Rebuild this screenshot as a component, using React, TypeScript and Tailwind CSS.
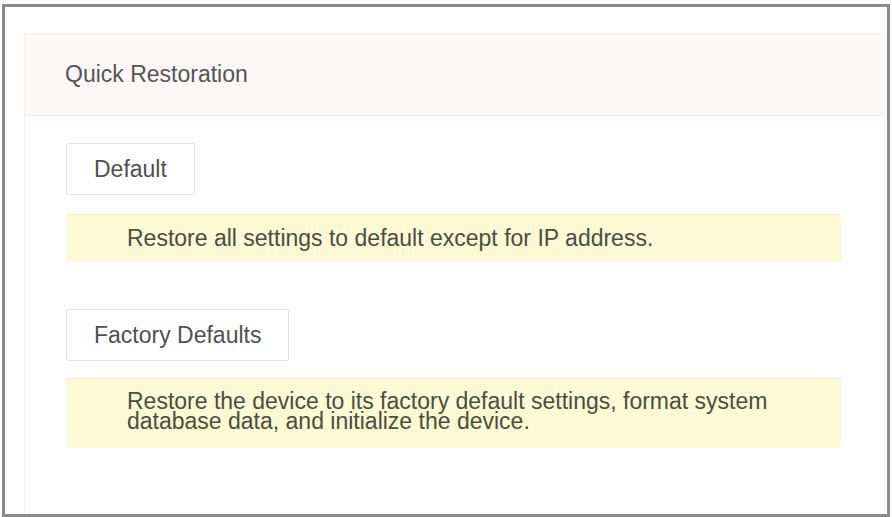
import React from 'react';

const notes = {
  basic: 'Restore all settings to default except for IP address.',
  factory: 'Restore the device to its factory default settings, format system database data, and initialize the device.',
};

function RestoreButton({ label }: { label: string }) {
  return (
    <button className="h-[52px] px-[27px] bg-white border border-[#e2e2e2] rounded-[2px] text-[23px] text-[#505050] leading-none">
      {label}
    </button>
  );
}

function Note({ text, tall }: { text: string; tall?: boolean }) {
  return (
    <div
      className={`w-[775px] bg-[#fcf9d4] border-t border-[#f3eec4] pl-[61px] pr-6 flex items-center text-[23px] text-[#4d4d42] leading-[20px] ${
        tall ? 'h-[70px] pb-[5px]' : 'h-[47px]'
      }`}
    >
      <p>{text}</p>
    </div>
  );
}

export default function App() {
  return (
    <div className="w-[892px] h-[517px] bg-white pt-[4px] pl-[2px]" style={{ fontFamily: '"Liberation Sans", Arial, sans-serif' }}>
      <div className="w-[888px] h-[513px] border-[3px] border-[#8a8a8a] bg-white pt-[26px] pl-[19px] pr-[2px] flex flex-col">
        <div className="flex-1 border-l border-t border-r border-[#f1f1f1] flex flex-col">
          {/* header */}
          <div className="h-[82px] bg-[#fcf8f8] border-b border-[#f2eeee] flex items-center pl-[40px]">
            <h1 className="text-[23px] text-[#555]">Quick Restoration</h1>
          </div>

          <div className="pl-[41px] pt-[27px] flex flex-col items-start">
            <RestoreButton label="Default" />
            <div className="mt-[19px]">
              <Note text={notes.basic} />
            </div>
            <div className="mt-[48px]">
              <RestoreButton label="Factory Defaults" />
            </div>
            <div className="mt-[17px]">
              <Note text={notes.factory} tall />
            </div>
          </div>
        </div>
      </div>
    </div>
  );
}
